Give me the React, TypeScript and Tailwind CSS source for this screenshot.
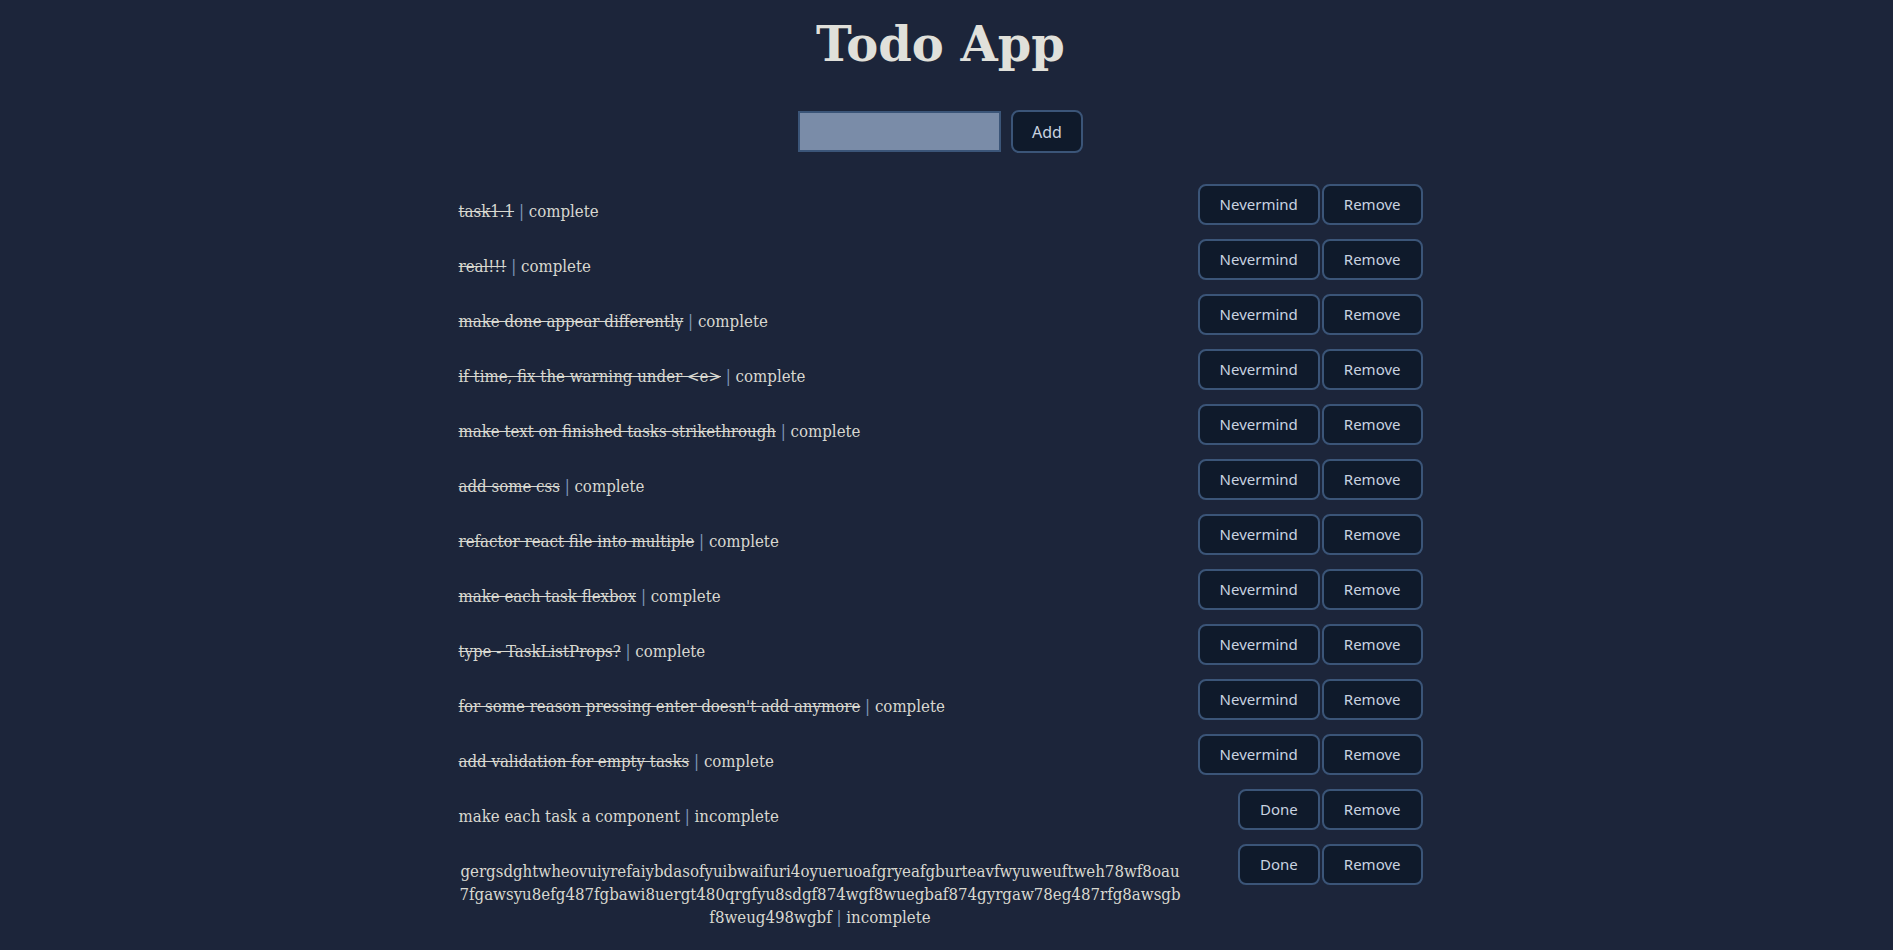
import React from "react";

type Task = { id: number; text: string; done: boolean };

const tasks: Task[] = [
  { id: 1, text: "task1.1", done: true },
  { id: 2, text: "real!!!", done: true },
  { id: 3, text: "make done appear differently", done: true },
  { id: 4, text: "if time, fix the warning under <e>", done: true },
  { id: 5, text: "make text on finished tasks strikethrough", done: true },
  { id: 6, text: "add some css", done: true },
  { id: 7, text: "refactor react file into multiple", done: true },
  { id: 8, text: "make each task flexbox", done: true },
  { id: 9, text: "type - TaskListProps?", done: true },
  { id: 10, text: "for some reason pressing enter doesn't add anymore", done: true },
  { id: 11, text: "add validation for empty tasks", done: true },
  { id: 12, text: "make each task a component", done: false },
  {
    id: 13,
    text: "gergsdghtwheovuiyrefaiybdasofyuibwaifuri4oyueruoafgryeafgburteavfwyuweuftweh78wf8oau7fgawsyu8efg487fgbawi8uergt480qrgfyu8sdgf874wgf8wuegbaf874gyrgaw78eg487rfg8awsgbf8weug498wgbf",
    done: false,
  },
];

const btn =
  "h-[41px] px-5 rounded-lg border-2 border-[#3b5578] bg-[#0f1a2b] text-[#c9d3e0] text-[15px] font-['Noto_Sans',sans-serif]";

const TaskItem = ({ task }: { task: Task }) => (
  <li className="flex items-start justify-between">
    <p className="my-4 max-w-[75%] text-center break-all text-[16.7px] leading-[23px] text-[#d8d8d0] [font-stretch:condensed] font-['DejaVu_Serif_Condensed','DejaVu_Serif',serif]">
      <span className={task.done ? "line-through" : ""}>{task.text}</span>
      <span className="text-[#7d97b8]"> | </span>
      {task.done ? "complete" : "incomplete"}
    </p>
    <div className="flex gap-[2px]">
      <button className={btn}>{task.done ? "Nevermind" : "Done"}</button>
      <button className={btn}>Remove</button>
    </div>
  </li>
);

export default function App() {
  return (
    <div className="min-h-screen bg-[#1c253a] pr-3">
      <div className="flex flex-col items-center">
        <h1 className="mt-4 text-[48px] leading-[56px] font-bold text-[#e0e0da] font-['DejaVu_Serif',serif]">
          Todo App
        </h1>
        <div className="mt-[38px] flex items-center gap-[10px]">
          <input className="w-[203px] h-[41px] border-2 border-[#3b5578] bg-[#7a8ca8] outline-none" />
          <button className="h-[43px] w-[72px] rounded-lg border-2 border-[#3b5578] bg-[#0f1a2b] text-[#c9d3e0] text-[16px] font-['Noto_Sans',sans-serif]">
            Add
          </button>
        </div>
      </div>
      <ul className="mx-auto mt-[31px] w-[964px]">
        {tasks.map((t) => (
          <TaskItem key={t.id} task={t} />
        ))}
      </ul>
    </div>
  );
}
